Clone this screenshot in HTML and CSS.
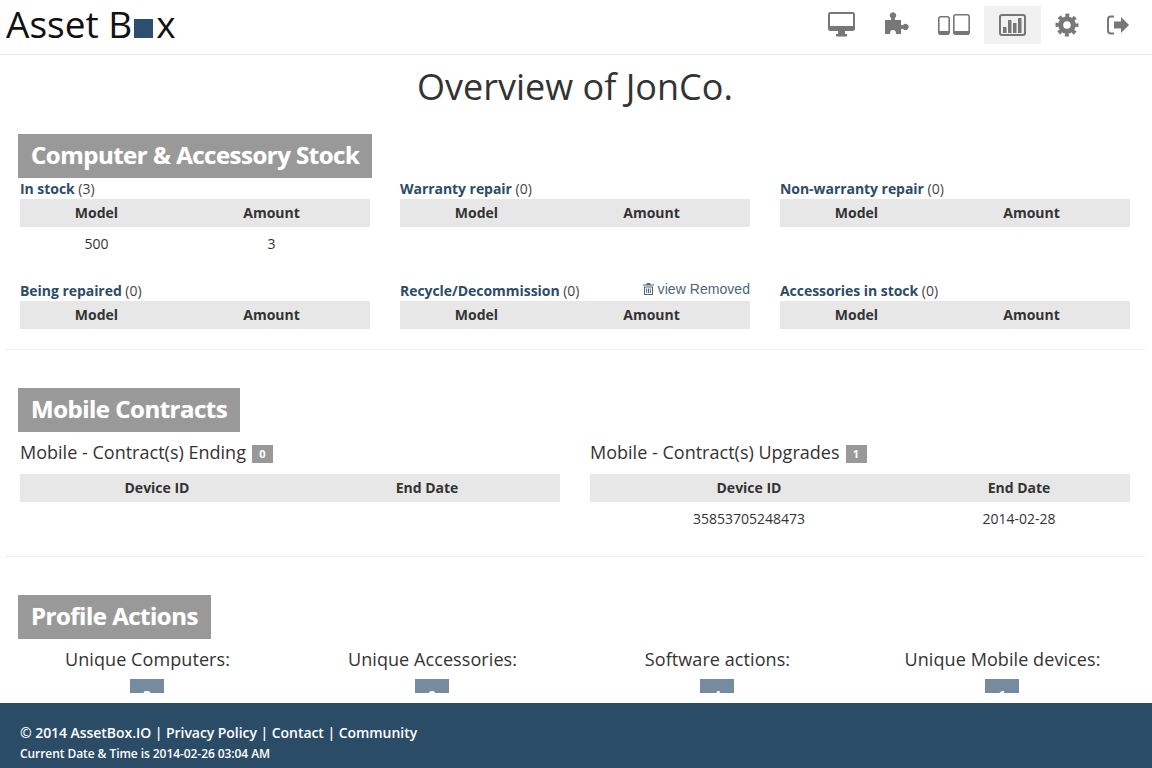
FILE: index.html
```html
<!DOCTYPE html>
<html lang="en">
<head>
  <meta charset="UTF-8" />
  <title>Overview of JonCo. - Asset Box</title>
  <link rel="stylesheet" href="styles.css">
</head>
<body>

<!-- Top bar -->
<header class="topbar">
  <a class="logo" href="#">Asset B<span class="logo-box"></span>x</a>
  <nav class="nav">
    <a class="nav-item" href="#" aria-label="Computers">
      <svg width="35" height="26" viewBox="0 0 35 26">
        <path fill-rule="evenodd" d="M6.5 0h22a2.5 2.5 0 0 1 2.5 2.5v14a2.5 2.5 0 0 1-2.5 2.5h-22a2.5 2.5 0 0 1-2.5-2.5v-14a2.5 2.5 0 0 1 2.5-2.5zM6 2v12h23v-12z"/>
        <path d="M14 19h7v3h2v2.500h-11v-2.500h2z"/>
      </svg>
    </a>
    <a class="nav-item" href="#" aria-label="Accessories">
      <svg width="35" height="26" viewBox="0 0 35 26">
        <path d="M4 8h5.500c1-.6 1-1.500.3-2.300a3.100 3.100 0 1 1 4.400 0c-.7.800-.7 1.700.3 2.300h5.500v4.500c.6 1 1.500 1 2.300.3a3.100 3.100 0 1 1 0 4.400c-.8-.7-1.700-.7-2.300.3v4.500h-4.600c-.6 0-.7-.5-.5-1a2.900 2.900 0 1 0-5.800 0c.2.500.1 1-.5 1h-4.600z"/>
      </svg>
    </a>
    <a class="nav-item" href="#" aria-label="Mobile devices">
      <svg width="35" height="26" viewBox="0 0 35 26">
        <rect class="line" x="0.800" y="4.800" width="10.400" height="17.400" rx="2"/>
        <rect x="1" y="19" width="10" height="3"/>
        <rect class="line" x="15.800" y="2.800" width="15.400" height="19.400" rx="2"/>
        <rect x="16" y="19" width="15" height="3"/>
      </svg>
    </a>
    <a class="nav-item active" href="#" aria-label="Reports">
      <svg width="35" height="26" viewBox="0 0 35 26">
        <rect class="line thick" x="5" y="3" width="25" height="20" rx="2"/>
        <rect x="8" y="15" width="3.500" height="6"/>
        <rect x="13" y="8" width="3.500" height="13"/>
        <rect x="18" y="11" width="3.500" height="10"/>
        <rect x="23" y="6" width="3.500" height="15"/>
      </svg>
    </a>
    <a class="nav-item" href="#" aria-label="Settings">
      <svg width="35" height="26" viewBox="0 0 35 26">
        <circle class="gear-body" cx="15" cy="13" r="6.300"/>
        <circle class="gear-teeth" cx="15" cy="13" r="9.800"/>
      </svg>
    </a>
    <a class="nav-item nav-item-last" href="#" aria-label="Log out">
      <svg width="35" height="26" viewBox="0 0 35 26">
        <path class="line thick" d="M13 4.500H10a3 3 0 0 0-3 3v11a3 3 0 0 0 3 3h3"/>
        <path d="M13 9.500h7v-4.500l8 8-8 8v-4.500h-7z"/>
      </svg>
    </a>
  </nav>
</header>

<main class="content">
  <h1>Overview of JonCo.</h1>

  <!-- Stock -->
  <h2 class="section-title">Computer &amp; Accessory Stock</h2>
  <div class="stock-grid">
    <div class="block">
      <div class="block-label"><span><b>In stock</b> (3)</span></div>
      <table>
        <tr><th class="col-model">Model</th><th>Amount</th></tr>
        <tr><td>500</td><td>3</td></tr>
      </table>
    </div>
    <div class="block">
      <div class="block-label"><span><b>Warranty repair</b> (0)</span></div>
      <table>
        <tr><th class="col-model">Model</th><th>Amount</th></tr>
      </table>
    </div>
    <div class="block">
      <div class="block-label"><span><b>Non-warranty repair</b> (0)</span></div>
      <table>
        <tr><th class="col-model">Model</th><th>Amount</th></tr>
      </table>
    </div>
    <div class="block">
      <div class="block-label"><span><b>Being repaired</b> (0)</span></div>
      <table>
        <tr><th class="col-model">Model</th><th>Amount</th></tr>
      </table>
    </div>
    <div class="block">
      <div class="block-label">
        <span><b>Recycle/Decommission</b> (0)</span>
        <a class="view-removed" href="#">
          <svg width="11" height="12" viewBox="0 0 11 12">
            <path d="M4 0h3l.6 1.500H11v1H0v-1h3.400zM1 3.500h9V12H1zM2 4.500V11h7V4.500zM3.200 5.500h1v4.500h-1zM5 5.500h1v4.500H5zM6.800 5.500h1v4.500h-1z" fill-rule="evenodd"/>
          </svg>
          view Removed
        </a>
      </div>
      <table>
        <tr><th class="col-model">Model</th><th>Amount</th></tr>
      </table>
    </div>
    <div class="block">
      <div class="block-label"><span><b>Accessories in stock</b> (0)</span></div>
      <table>
        <tr><th class="col-model">Model</th><th>Amount</th></tr>
      </table>
    </div>
  </div>

  <hr />

  <!-- Mobile -->
  <h2 class="section-title">Mobile Contracts</h2>
  <div class="mobile-grid">
    <div class="block">
      <h3 class="mobile-title">Mobile - Contract(s) Ending <span class="count">0</span></h3>
      <table>
        <tr><th class="col-ending">Device ID</th><th>End Date</th></tr>
      </table>
    </div>
    <div class="block">
      <h3 class="mobile-title">Mobile - Contract(s) Upgrades <span class="count">1</span></h3>
      <table>
        <tr><th class="col-upgrade">Device ID</th><th>End Date</th></tr>
        <tr><td>35853705248473</td><td>2014-02-28</td></tr>
      </table>
    </div>
  </div>

  <hr />

  <!-- Profile -->
  <h2 class="section-title">Profile Actions</h2>
  <div class="stats">
    <div class="stat"><div class="stat-label">Unique Computers:</div><div class="stat-value">3</div></div>
    <div class="stat"><div class="stat-label">Unique Accessories:</div><div class="stat-value">0</div></div>
    <div class="stat"><div class="stat-label">Software actions:</div><div class="stat-value">4</div></div>
    <div class="stat"><div class="stat-label">Unique Mobile devices:</div><div class="stat-value">1</div></div>
  </div>
</main>

<footer class="footer">
  <div class="footer-links">© 2014 AssetBox.IO | <a href="#">Privacy Policy</a> | <a href="#">Contact</a> | <a href="#">Community</a></div>
  <div class="footer-time">Current Date &amp; Time is 2014-02-26 03:04 AM</div>
</footer>

</body>
</html>
```

FILE: styles.css
```css
* {
  margin: 0;
  padding: 0;
  box-sizing: border-box;
}

body {
  font-family: "Open Sans", "Liberation Sans", sans-serif;
  font-size: 14px;
  color: #333;
  background: #fff;
  height: 100vh;
  display: flex;
  flex-direction: column;
  overflow: hidden;
}

a {
  color: inherit;
  text-decoration: none;
}

/* Top bar */
.topbar {
  flex: none;
  height: 55px;
  border-bottom: 1px solid #e7e7e7;
  display: flex;
  justify-content: space-between;
  padding: 6px 13px 0 6px;
}

.logo {
  font-size: 37px;
  line-height: 36px;
  color: #111;
}

.logo-box {
  display: inline-block;
  width: 19px;
  height: 19px;
  background: #2c4f6d;
  margin: 0 3px 0 2px;
}

.nav {
  display: flex;
}

.nav-item {
  width: 57px;
  height: 38px;
  display: flex;
  align-items: center;
  justify-content: center;
}

.nav-item-last {
  width: 41px;
}

.nav-item.active {
  background: #f1f1f1;
}

.nav-item svg {
  fill: #777;
}

.nav-item .line {
  fill: none;
  stroke: #777;
  stroke-width: 1.6;
}

.nav-item .thick {
  stroke-width: 2;
}

.gear-body {
  fill: none;
  stroke: #777;
  stroke-width: 5;
}

.gear-teeth {
  fill: none;
  stroke: #777;
  stroke-width: 3.4;
  stroke-dasharray: 3.9 3.8;
  stroke-dashoffset: 1.95;
}

/* Main area */
.content {
  flex: 1;
  min-height: 0;
  overflow: hidden;
  margin-bottom: 10px;
  width: 1140px;
  margin-left: 5px;
}

h1 {
  font-size: 36px;
  font-weight: 400;
  line-height: 40px;
  text-align: center;
  margin-top: 12px;
  margin-bottom: 27px;
}

.section-title {
  display: table;
  margin-left: 13px;
  padding: 0 13px;
  height: 44px;
  line-height: 42px;
  font-size: 24px;
  font-weight: 700;
  color: #fff;
  background: #999;
  letter-spacing: -0.5px;
  text-shadow: 0 0 1px rgba(255, 255, 255, 0.5);
}

.stock-grid {
  display: grid;
  grid-template-columns: repeat(3, 380px);
  grid-template-rows: 81px 47px;
  row-gap: 21px;
  margin-top: 2px;
}

.mobile-grid {
  display: grid;
  grid-template-columns: repeat(2, 570px);
  margin-top: 10px;
}

.block {
  padding: 0 15px;
}

.block-label {
  height: 19px;
  line-height: 17px;
  font-size: 14px;
  display: flex;
  justify-content: space-between;
  color: #444;
}

.block-label b {
  color: #2c4c68;
  letter-spacing: -0.05px;
}

.view-removed {
  color: #4d657d;
  font-family: "Liberation Sans", sans-serif;
  font-size: 14px;
  line-height: 15px;
  letter-spacing: 0.05px;
}

.view-removed svg {
  fill: #4d657d;
  vertical-align: -1px;
}

table {
  width: 100%;
  border-collapse: collapse;
  table-layout: fixed;
}

th {
  height: 28px;
  padding-bottom: 2px;
  background: #e7e7e7;
  font-size: 14px;
  font-weight: 700;
  text-align: center;
}

td {
  height: 34px;
  padding-bottom: 2px;
  font-size: 14px;
  text-align: center;
}

.col-model {
  width: 153px;
}

.col-ending {
  width: 274px;
}

.col-upgrade {
  width: 318px;
}

hr {
  border: 0;
  border-top: 1px solid #eee;
  margin: 20px 0 38px;
}

.mobile-title {
  height: 20px;
  font-size: 18px;
  font-weight: 400;
  line-height: 20px;
  letter-spacing: 0.01px;
  margin-bottom: 12px;
  color: #333;
}

.count {
  display: inline-block;
  vertical-align: 1px;
  width: 21px;
  height: 18px;
  line-height: 18px;
  margin-left: 1.3px;
  background: #999;
  color: #fff;
  font-size: 11px;
  font-weight: 700;
  text-align: center;
}

.stats {
  display: grid;
  grid-template-columns: repeat(4, 285px);
  margin-top: 10px;
  text-align: center;
}

.stat-label {
  font-size: 18px;
  line-height: 20px;
  letter-spacing: 0.08px;
}

.stat-value {
  width: 34px;
  height: 34px;
  line-height: 34px;
  margin: 10px 0 0 125px;
  background: #778b9f;
  color: #fff;
  font-size: 14px;
  font-weight: 700;
}

/* Footer */
.footer {
  flex: none;
  height: 65px;
  background: #2b4c67;
  color: #fff;
  padding: 20px 20px 0;
}

.footer-links {
  font-size: 14px;
  font-weight: 600;
  line-height: 20px;
  letter-spacing: -0.05px;
}

.footer-time {
  font-size: 12px;
  font-weight: 600;
  line-height: 16px;
  letter-spacing: -0.07px;
  margin-top: 3px;
}
```
